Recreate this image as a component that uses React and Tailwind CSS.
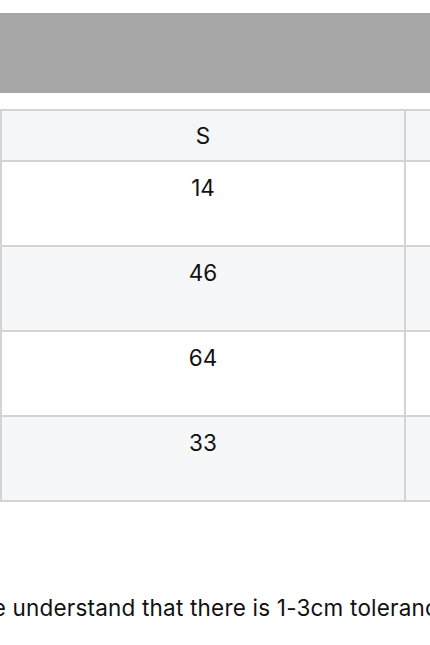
import React from "react";

const rows = ["14", "46", "64", "33"];

export default function App() {
  return (
    <div className="w-[430px] h-[645px] overflow-hidden bg-white font-['Inter','Liberation_Sans',sans-serif] text-[#111]">
      {/* banner placeholder */}
      <div className="pt-[13px]">
        <div className="h-[80px] bg-[#a6a6a6]" />
      </div>

      {/* size table, scrolled sideways */}
      <div className="mt-[16px] w-[1230px]">
        <table className="table-fixed border-collapse w-[1212px] text-[22.5px]">
          <colgroup>
            <col className="w-[404px]" />
            <col className="w-[404px]" />
            <col className="w-[404px]" />
          </colgroup>
          <thead>
            <tr className="bg-[#f5f6f8]">
              <th className="h-[51px] border-2 border-[#d4d4d4] font-normal text-center">S</th>
              <th className="h-[51px] border-2 border-[#d4d4d4] font-normal text-center">M</th>
              <th className="h-[51px] border-2 border-[#d4d4d4] font-normal text-center">L</th>
            </tr>
          </thead>
          <tbody>
            {rows.map((v, i) => (
              <tr key={i} className={i % 2 === 1 ? "bg-[#f6f7f9]" : "bg-white"}>
                <td className="h-[85px] border-2 border-[#d4d4d4] align-top text-center pt-[9px]">{v}</td>
                <td className="h-[85px] border-2 border-[#d4d4d4] align-top text-center pt-[9px]"></td>
                <td className="h-[85px] border-2 border-[#d4d4d4] align-top text-center pt-[9px]"></td>
              </tr>
            ))}
          </tbody>
        </table>
      </div>

      <p className="mt-[92px] ml-[-66px] whitespace-nowrap text-[22.5px] tracking-[0.2px] leading-[28px]">
        Please understand that there is 1-3cm tolerance due to manual measurement.
      </p>
    </div>
  );
}
